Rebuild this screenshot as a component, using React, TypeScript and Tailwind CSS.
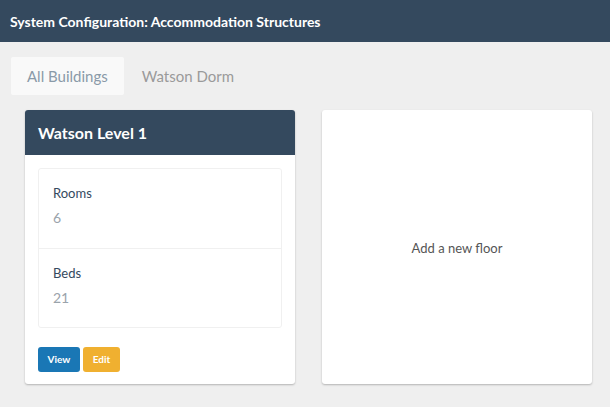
export default function App() {
  const stats = [
    { label: 'Rooms', value: '6' },
    { label: 'Beds', value: '21' },
  ];

  return (
    <div className="min-h-[407px] bg-[#efefef] font-['Lato','Noto_Sans',sans-serif]">
      <header className="h-[42px] bg-[#34495e] flex items-center px-[10px]">
        <h1 className="text-white text-[14px] font-bold">System Configuration: Accommodation Structures</h1>
      </header>

      <div className="px-[11px] pt-[15px]">
        <nav className="flex">
          <button className="h-[38px] px-[16px] bg-[#f9f9f9] rounded-[2px] text-[15px] text-[#8a9aa8]">All Buildings</button>
          <button className="h-[38px] px-[18px] text-[15px] text-[#9a9a9a]">Watson Dorm</button>
        </nav>

        <div className="flex gap-[27px] pl-[14px] pt-[15px]">
          <div className="w-[270px] h-[274px] bg-white rounded-[3px] shadow-[0_1px_2px_rgba(0,0,0,0.25)] overflow-hidden flex flex-col">
            <div className="h-[45px] bg-[#34495e] flex items-center px-[13px]">
              <h2 className="text-white text-[16px] font-bold">Watson Level 1</h2>
            </div>
            <div className="px-[13px] pt-[13px]">
              <ul className="border border-[#f0f0f0] rounded-[3px] w-[244px]">
                {stats.map((s, i) => (
                  <li key={s.label} className={`h-[79px] px-[14px] pt-[16px] ${i > 0 ? 'border-t border-[#f0f0f0]' : ''}`}>
                    <p className="text-[13px] text-[#34495e] leading-[16px]">{s.label}</p>
                    <p className="text-[14px] text-[#9aa3ab] mt-[9px] leading-[16px]">{s.value}</p>
                  </li>
                ))}
              </ul>
              <div className="flex gap-[3px] mt-[19px]">
                <button className="h-[25px] w-[42px] rounded-[3px] bg-[#1a77b5] text-white text-[10px] font-bold">View</button>
                <button className="h-[25px] w-[37px] rounded-[3px] bg-[#f0b030] text-white text-[10px] font-bold">Edit</button>
              </div>
            </div>
          </div>

          <div className="w-[270px] h-[274px] bg-white rounded-[3px] shadow-[0_1px_2px_rgba(0,0,0,0.25)] flex items-center justify-center">
            <p className="text-[13px] text-[#555] pt-[4px]">Add a new floor</p>
          </div>
        </div>
      </div>
    </div>
  );
}
